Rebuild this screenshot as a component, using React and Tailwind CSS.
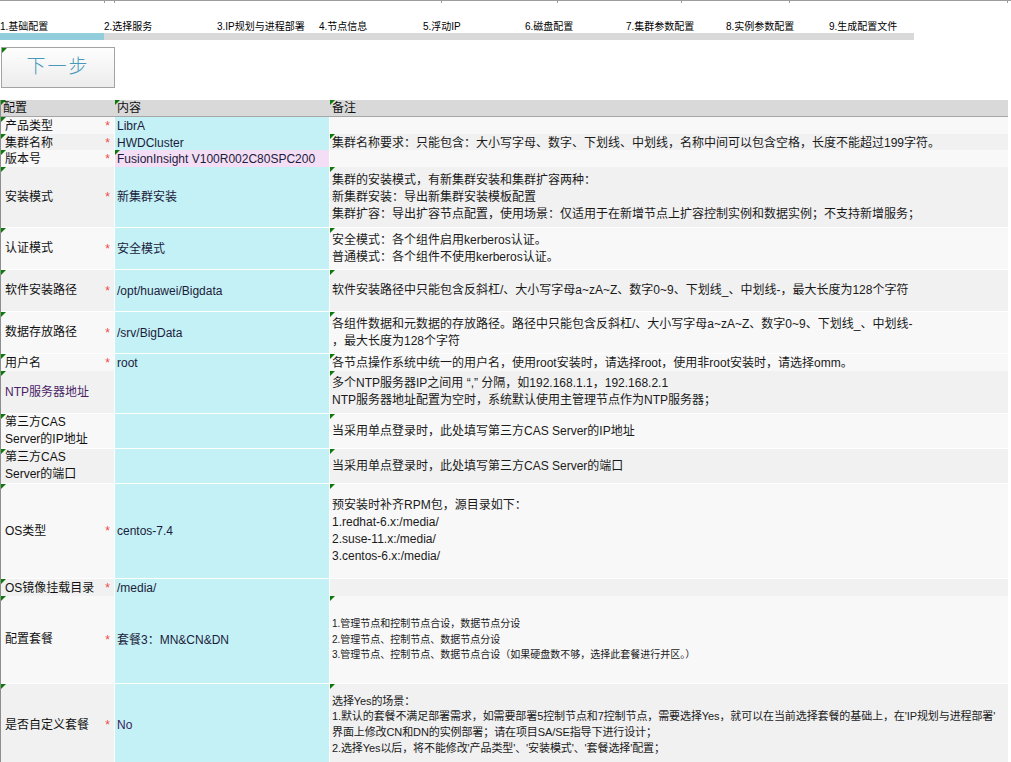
import React from "react";

const CJK = "font-['Liberation_Sans','Noto_Sans_CJK_SC',sans-serif]";

// Excel-like green corner marker
const Tri = () => (
  <span className="absolute left-0 top-0 h-0 w-0 border-t-[5px] border-r-[5px] border-t-[#0b7a0b] border-r-transparent" />
);

const steps = [
  { label: "1.基础配置", w: "w-[104px]" },
  { label: "2.选择服务", w: "w-[113px]" },
  { label: "3.IP规划与进程部署", w: "w-[102px]" },
  { label: "4.节点信息", w: "w-[104px]" },
  { label: "5.浮动IP", w: "w-[102px]" },
  { label: "6.磁盘配置", w: "w-[101px]" },
  { label: "7.集群参数配置", w: "w-[100px]" },
  { label: "8.实例参数配置", w: "w-[103px]" },
  { label: "9.生成配置文件", w: "w-[90px]" },
];

const L = "bg-[#f8f8f8]";
const D = "bg-[#f1f1f1]";

const rows = [
  { label: "产品类型", req: true, value: "LibrA", h: "h-[17px]", bg: L },
  {
    label: "集群名称",
    req: true,
    value: "HWDCluster",
    h: "h-[16px]",
    bg: D,
    tri: true,
    note: ["集群名称要求：只能包含：大小写字母、数字、下划线、中划线，名称中间可以包含空格，长度不能超过199字符。"],
  },
  {
    label: "版本号",
    req: true,
    value: "FusionInsight V100R002C80SPC200",
    h: "h-[17px]",
    bg: L,
    pink: true,
  },
  {
    label: "安装模式",
    req: true,
    value: "新集群安装",
    h: "h-[61px]",
    bg: D,
    tri: true,
    note: [
      "集群的安装模式，有新集群安装和集群扩容两种：",
      "新集群安装：导出新集群安装模板配置",
      "集群扩容：导出扩容节点配置，使用场景：仅适用于在新增节点上扩容控制实例和数据实例；不支持新增服务；",
    ],
  },
  {
    label: "认证模式",
    req: true,
    value: "安全模式",
    h: "h-[42px]",
    bg: L,
    tri: true,
    note: ["安全模式：各个组件启用kerberos认证。", "普通模式：各个组件不使用kerberos认证。"],
  },
  {
    label: "软件安装路径",
    req: true,
    value: "/opt/huawei/Bigdata",
    h: "h-[42px]",
    bg: D,
    tri: true,
    note: ["软件安装路径中只能包含反斜杠/、大小写字母a~zA~Z、数字0~9、下划线_、中划线-，最大长度为128个字符"],
  },
  {
    label: "数据存放路径",
    req: true,
    value: "/srv/BigData",
    h: "h-[42px]",
    bg: L,
    tri: true,
    note: [
      "各组件数据和元数据的存放路径。路径中只能包含反斜杠/、大小写字母a~zA~Z、数字0~9、下划线_、中划线-",
      "，最大长度为128个字符",
    ],
  },
  {
    label: "用户名",
    req: true,
    value: "root",
    h: "h-[17px]",
    bg: L,
    tri: true,
    note: ["各节点操作系统中统一的用户名，使用root安装时，请选择root，使用非root安装时，请选择omm。"],
  },
  {
    label: "NTP服务器地址",
    purple: true,
    h: "h-[43px]",
    bg: D,
    tri: true,
    note: [
      "多个NTP服务器IP之间用 “,” 分隔，如192.168.1.1，192.168.2.1",
      "NTP服务器地址配置为空时，系统默认使用主管理节点作为NTP服务器；",
    ],
  },
  {
    label: ["第三方CAS", "Server的IP地址"],
    h: "h-[35px]",
    bg: L,
    tri: true,
    note: ["当采用单点登录时，此处填写第三方CAS Server的IP地址"],
  },
  {
    label: ["第三方CAS", "Server的端口"],
    h: "h-[35px]",
    bg: D,
    tri: true,
    note: ["当采用单点登录时，此处填写第三方CAS Server的端口"],
  },
  {
    label: "OS类型",
    req: true,
    value: "centos-7.4",
    h: "h-[95px]",
    bg: L,
    tri: true,
    note: ["预安装时补齐RPM包，源目录如下：", "1.redhat-6.x:/media/", "2.suse-11.x:/media/", "3.centos-6.x:/media/"],
  },
  { label: "OS镜像挂载目录", req: true, value: "/media/", h: "h-[17px]", bg: D },
  {
    label: "配置套餐",
    req: true,
    value: "套餐3：MN&CN&DN",
    h: "h-[88px]",
    bg: L,
    tri: true,
    small: "text-[10px] leading-[15.5px]",
    note: [
      "1.管理节点和控制节点合设，数据节点分设",
      "2.管理节点、控制节点、数据节点分设",
      "3.管理节点、控制节点、数据节点合设（如果硬盘数不够，选择此套餐进行并区。）",
    ],
  },
  {
    label: "是否自定义套餐",
    req: true,
    value: "No",
    h: "h-[83px]",
    bg: D,
    tri: true,
    valueColor: "text-[#3b1d5e]",
    small: "text-[11px] leading-[15.6px] tracking-[-0.1px]",
    note: [
      "选择Yes的场景：",
      "1.默认的套餐不满足部署需求，如需要部署5控制节点和7控制节点，需要选择Yes，就可以在当前选择套餐的基础上，在'IP规划与进程部署'",
      "界面上修改CN和DN的实例部署；请在项目SA/SE指导下进行设计；",
      "2.选择Yes以后，将不能修改'产品类型'、'安装模式'、'套餐选择'配置；",
    ],
  },
];

const ConfigRow = ({ row }) => (
  <div className={`grid grid-cols-[113px_214px_678px] gap-x-px border-b border-white ${row.h}`}>
    <div className={`relative flex items-center pl-[4px] pr-[3px] ${row.bg}`}>
      <Tri />
      <div className={`flex-1 text-[12px] leading-[17px] ${row.purple ? "text-[#4a1f66]" : "text-[#111]"}`}>
        {Array.isArray(row.label) ? row.label.map((t) => <div key={t}>{t}</div>) : row.label}
      </div>
      {row.req && <span className="self-center pr-[1px] text-[12px] leading-none text-[#f04848]">*</span>}
    </div>
    <div
      className={`relative flex items-center pl-[2px] text-[12px] whitespace-nowrap ${
        row.pink ? "bg-[#f3def6]" : "bg-[#c4f1f5]"
      } ${row.valueColor || "text-[#1c1c3c]"}`}
    >
      {row.pink && <Tri />}
      {row.value}
    </div>
    <div className={`relative flex flex-col justify-center pl-[2px] text-[#1a1a1a] ${row.bg}`}>
      {row.tri && <Tri />}
      <div className={`whitespace-nowrap ${row.small || "text-[12px] leading-[17px]"}`}>
        {(row.note || []).map((t, i) => (
          <div key={i}>{t}</div>
        ))}
      </div>
    </div>
  </div>
);

export default function App() {
  return (
    <div className={`w-[1011px] h-[762px] overflow-hidden bg-white ${CJK}`}>
      {/* top sheet edge */}
      <div className="flex h-[3px] border-t border-[#9c9c9c]">
        <div className="w-[105px] border-r border-[#9c9c9c]" />
        <div className="w-[10px] border-r border-[#9c9c9c]" />
        <div className="w-[327px] border-r border-[#9c9c9c]" />
        <div className="w-[116px] border-r border-[#9c9c9c]" />
        <div className="w-[124px] border-r border-[#9c9c9c]" />
        <div className="w-[108px] border-r border-[#9c9c9c]" />
        <div className="w-[218px] border-r border-[#9c9c9c]" />
      </div>

      {/* wizard steps */}
      <div className="mt-[17px] flex h-[13px] items-center text-[10px] leading-none text-black">
        {steps.map((s) => (
          <div key={s.label} className={`${s.w} shrink-0 whitespace-nowrap`}>
            {s.label}
          </div>
        ))}
      </div>
      <div className="flex h-[7px] w-[914px]">
        <div className="w-[104px] bg-[#92cddc]" />
        <div className="flex-1 bg-[#d9d9d9]" />
      </div>

      {/* next button */}
      <div className="mt-[7px] pl-px">
        <button className="relative flex h-[41px] w-[114px] items-center justify-center border border-[#a3a3a3] bg-gradient-to-b from-[#fefefe] to-[#ececec] text-[19px] font-light tracking-[2px] text-[#4898bb]">
          <Tri />
          下一步
        </button>
      </div>

      {/* sheet */}
      <div className="mt-[12px] w-[1008px] border-l border-[#8e8e8e]">
        <div className="grid h-[17px] grid-cols-[113px_214px_678px] gap-x-px border-b border-[#a6a6a6] bg-[#d9d9d9] text-[12px] leading-[16px] text-[#111]">
          <div className="relative bg-[#d9d9d9] pl-[2px]">
            <Tri />
            配置
          </div>
          <div className="relative bg-[#d9d9d9] pl-[2px]">
            <Tri />
            内容
          </div>
          <div className="relative bg-[#d9d9d9] pl-[2px]">
            <Tri />
            备注
          </div>
        </div>
        <div className="bg-white">
          {rows.map((r, i) => (
            <ConfigRow key={i} row={r} />
          ))}
        </div>
      </div>
    </div>
  );
}
